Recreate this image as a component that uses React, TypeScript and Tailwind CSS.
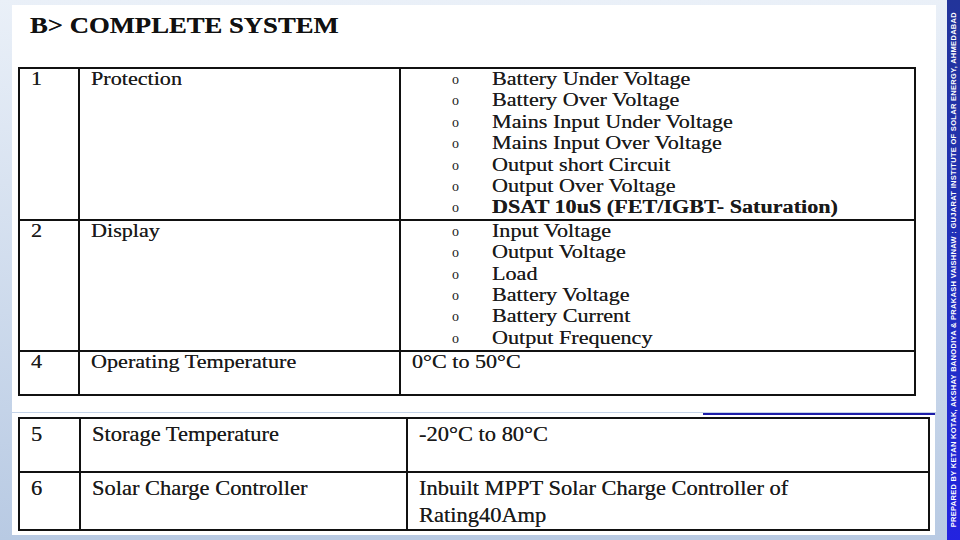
const protection = [
  "Battery Under Voltage",
  "Battery Over Voltage",
  "Mains Input Under Voltage",
  "Mains Input Over Voltage",
  "Output short Circuit",
  "Output Over Voltage",
];

const display = [
  "Input Voltage",
  "Output Voltage",
  "Load",
  "Battery Voltage",
  "Battery Current",
  "Output Frequency",
];

// the slide is a stretched screenshot, so text is widened rather than spaced
function W({ children, className = "" }: { children: React.ReactNode; className?: string }) {
  return <span className={`inline-block origin-left whitespace-nowrap scale-x-[1.23] ${className}`}>{children}</span>;
}

function W2({ children }: { children: React.ReactNode }) {
  return <span className="inline-block origin-left whitespace-nowrap scale-x-[1.07]">{children}</span>;
}

function Bullets({ items, bold }: { items: string[]; bold?: string }) {
  return (
    <ul>
      {items.map((item) => (
        <li key={item} className="flex pl-[51px] leading-[21.4px]">
          <span className="w-[40px] text-[14px] [text-shadow:none]">o</span>
          <W>{item}</W>
        </li>
      ))}
      {bold && (
        <li className="flex pl-[51px] leading-[21.4px]">
          <span className="w-[40px] text-[14px] [text-shadow:none]">o</span>
          <W className="font-bold">{bold}</W>
        </li>
      )}
    </ul>
  );
}

export default function App() {
  const cell = "border-2 border-[#111] align-top";
  return (
    <div
      className="flex w-[960px] h-[540px] overflow-hidden bg-gradient-to-b from-[#eaf0f8] to-[#b8cae3] text-[#1a1a1a] [text-shadow:0_0_0.4px_#555]"
      style={{ fontFamily: '"Liberation Serif", "Times New Roman", serif' }}
    >
      {/* slide images */}
      <div className="flex flex-col pl-[12px] pt-[5px]">
        <div className="w-[924px] h-[407px] bg-white pl-[6px] pt-[7px]">
          <h1 className="pl-[12px] text-[23px] leading-[28px] font-bold text-[#111]">
            <span className="inline-block origin-left scale-x-[1.16]">B&gt; COMPLETE SYSTEM</span>
          </h1>
          <table className="mt-[27px] w-[896px] table-fixed border-collapse text-[18px]">
            <colgroup>
              <col className="w-[60px]" />
              <col className="w-[321px]" />
              <col className="w-[515px]" />
            </colgroup>
            <tbody>
              <tr>
                <td className={`${cell} h-[150px] pl-[11px] leading-[21.4px]`}><W>1</W></td>
                <td className={`${cell} pl-[11px] leading-[21.4px]`}><W>Protection</W></td>
                <td className={cell}>
                  <Bullets items={protection} bold="DSAT 10uS (FET/IGBT- Saturation)" />
                </td>
              </tr>
              <tr>
                <td className={`${cell} h-[131px] pl-[11px] leading-[21.4px]`}><W>2</W></td>
                <td className={`${cell} pl-[11px] leading-[21.4px]`}><W>Display</W></td>
                <td className={cell}>
                  <Bullets items={display} />
                </td>
              </tr>
              <tr>
                <td className={`${cell} h-[44px] pl-[11px] leading-[21.4px]`}><W>4</W></td>
                <td className={`${cell} pl-[11px] leading-[21.4px]`}><W>Operating Temperature</W></td>
                <td className={`${cell} pl-[11px] leading-[21.4px]`}><W>0°C to 50°C</W></td>
              </tr>
            </tbody>
          </table>
        </div>

        <div className="mt-[1px] w-[923px] h-[122px] bg-white pl-[6px]">
          <div className="flex justify-end">
            <div className="w-[232px] h-[2px] bg-[#1c1ca8]" />
          </div>
          <table className="mt-[2px] w-[910px] table-fixed border-collapse text-[21px]">
            <colgroup>
              <col className="w-[61px]" />
              <col className="w-[327px]" />
              <col className="w-[522px]" />
            </colgroup>
            <tbody>
              <tr>
                <td className={`${cell} h-[54px] pl-[11px] pt-[2px] leading-[27px]`}><W2>5</W2></td>
                <td className={`${cell} pl-[11px] pt-[2px] leading-[27px]`}><W2>Storage Temperature</W2></td>
                <td className={`${cell} pl-[11px] pt-[2px] leading-[27px]`}><W2>-20°C to 80°C</W2></td>
              </tr>
              <tr>
                <td className={`${cell} h-[56px] pl-[11px] pt-[2px] leading-[27px]`}><W2>6</W2></td>
                <td className={`${cell} pl-[11px] pt-[2px] leading-[27px]`}><W2>Solar Charge Controller</W2></td>
                <td className={`${cell} pl-[11px] pt-[2px] leading-[27px]`}>
                  <W2>Inbuilt MPPT Solar Charge Controller of</W2>
                  <br />
                  <W2>Rating40Amp</W2>
                </td>
              </tr>
            </tbody>
          </table>
        </div>
      </div>

      {/* credit bar */}
      <div className="ml-auto flex w-[13px] h-full items-center justify-center bg-gradient-to-b from-[#22349a] to-[#2323e0] [text-shadow:none]">
        <span
          className="rotate-180 whitespace-nowrap text-[7.5px] font-bold leading-[13px] tracking-[0.3px] text-white [writing-mode:vertical-rl]"
          style={{ fontFamily: '"Liberation Sans", Arial, sans-serif' }}
        >
          PREPARED BY KETAN KOTAK, AKSHAY BANODIYA &amp; PRAKASH VAISHNAW : GUJARAT INSTITUTE OF SOLAR ENERGY, AHMEDABAD
        </span>
      </div>
    </div>
  );
}
